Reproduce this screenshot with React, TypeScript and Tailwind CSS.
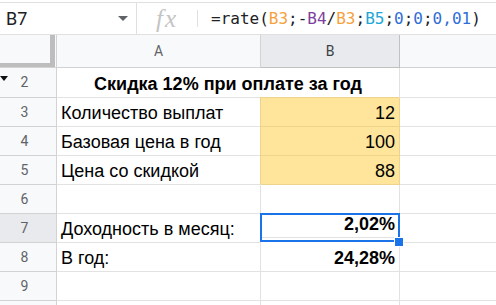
import React from "react";

const cellFont = { fontFamily: '"Liberation Sans", Arial, sans-serif' };

function RowHead({
  n,
  active,
  hidden,
}: {
  n?: number;
  active?: boolean;
  hidden?: boolean;
}) {
  return (
    <div
      className={`relative flex w-[57px] shrink-0 items-center justify-center border-r border-b border-[#d3d3d3] pr-[7px] font-['Roboto'] text-[14px] text-[#5f6368] ${
        active ? "bg-[#e8eaed] text-[#3c4043]" : "bg-[#f8f9fa]"
      }`}
    >
      {hidden && (
        <svg
          className="absolute left-0 top-[8px]"
          width="8"
          height="5"
          viewBox="0 0 8 5"
        >
          <path d="M0 0h8L4 5z" fill="#111" />
        </svg>
      )}
      {n}
    </div>
  );
}

function Row({
  n,
  h = "h-[29px]",
  active,
  hidden,
  children,
}: {
  n?: number;
  h?: string;
  active?: boolean;
  hidden?: boolean;
  children?: React.ReactNode;
}) {
  return (
    <div className={`flex ${h}`}>
      <RowHead n={n} active={active} hidden={hidden} />
      {children ?? (
        <>
          <Cell />
          <Cell b />
          <Tail />
        </>
      )}
    </div>
  );
}

function Cell({
  b,
  right,
  bold,
  yellow,
  children,
}: {
  b?: boolean;
  right?: boolean;
  bold?: boolean;
  yellow?: boolean;
  children?: React.ReactNode;
}) {
  return (
    <div
      style={cellFont}
      className={`flex shrink-0 items-end overflow-hidden whitespace-nowrap border-r border-b pb-[3px] text-[18px] leading-[20px] text-black ${
        b ? "w-[139px] pr-[4px]" : "w-[204px] pl-[4px]"
      } ${right ? "justify-end" : ""} ${bold ? "font-bold" : ""} ${
        yellow
          ? "border-[#ecd48c] bg-[#fee59b] shadow-[-1px_-1px_0_#ecd48c]"
          : "border-[#e2e2e2]"
      }`}
    >
      {children}
    </div>
  );
}

function Tail() {
  return <div className="flex-1 border-b border-[#e2e2e2]" />;
}

const ref = (c: string, t: string) => <span className={c}>{t}</span>;

export default function App() {
  return (
    <div className="h-[305px] w-[496px] overflow-hidden bg-white">
      {/* formula bar */}
      <div className="mt-[2px] flex h-[33px] border-t border-b border-[#e0e0e0]">
        <div className="flex w-[137px] shrink-0 items-center border-r border-[#e0e0e0] pl-[6px] pr-[8px]">
          <span className="flex-1 font-['Roboto'] text-[18px] text-[#202124]">
            B7
          </span>
          <svg width="10" height="5" viewBox="0 0 10 5">
            <path d="M0 0h10L5 5z" fill="#5f6368" />
          </svg>
        </div>
        <div className="flex w-[60px] shrink-0 items-center justify-center">
          <span className="font-['Liberation_Serif'] text-[25px] italic leading-none tracking-[2px] text-[#c4c4c4]">
            fx
          </span>
        </div>
        <div className="my-[7px] w-px bg-[#e0e0e0]" />
        <div className="flex items-center whitespace-pre pl-[13px] font-['DejaVu_Sans_Mono'] text-[16px] text-[#202124]">
          =rate({ref("text-[#f6a23e]", "B3")};-{ref("text-[#7e3f9c]", "B4")}/
          {ref("text-[#f6a23e]", "B3")};{ref("text-[#20a7d6]", "B5")};
          {ref("text-[#2f6ed6]", "0")};{ref("text-[#2f6ed6]", "0")};
          {ref("text-[#2f6ed6]", "0,01")})
        </div>
      </div>

      {/* column headers */}
      <div className="flex h-[33px] font-['Roboto'] text-[14px] text-[#5f6368]">
        <div className="flex w-[57px] shrink-0 flex-col border-r border-b border-[#d3d3d3] bg-[#f8f9fa]">
          <div className="flex flex-1">
            <div className="flex-1" />
            <div className="w-[5px] bg-[#bdbdbd]" />
            <div className="w-px" />
          </div>
          <div className="mr-px h-[4px] bg-[#bdbdbd]" />
        </div>
        <div className="flex w-[204px] shrink-0 items-center justify-center border-r border-b border-[#d3d3d3] bg-[#f8f9fa]">
          A
        </div>
        <div className="flex w-[139px] shrink-0 items-center justify-center border-r border-b border-[#c0c0c0] bg-[#e8eaed] text-[#3c4043]">
          B
        </div>
        <div className="flex-1 border-b border-[#d3d3d3] bg-[#f8f9fa]" />
      </div>

      <Row n={2} h="h-[30px]" hidden>
        <div
          style={cellFont}
          className="flex w-[343px] shrink-0 items-end justify-center border-r border-b border-[#e2e2e2] pb-[3px] text-[18px] font-bold leading-[20px] text-black"
        >
          Скидка 12% при оплате за год
        </div>
        <Tail />
      </Row>
      <Row n={3}>
        <Cell>Количество выплат</Cell>
        <Cell b right yellow>
          12
        </Cell>
        <Tail />
      </Row>
      <Row n={4}>
        <Cell>Базовая цена в год</Cell>
        <Cell b right yellow>
          100
        </Cell>
        <Tail />
      </Row>
      <Row n={5}>
        <Cell>Цена со скидкой</Cell>
        <Cell b right yellow>
          88
        </Cell>
        <Tail />
      </Row>
      <Row n={6} />
      <Row n={7} active>
        <Cell>Доходность в месяц:</Cell>
        <div className="relative w-[139px] shrink-0">
          <Cell b right bold>
            2,02%
          </Cell>
          <div className="pointer-events-none absolute -left-px -top-px h-[29px] w-[140px] border-2 border-[#1a73e8]" />
          <div className="absolute left-[133px] top-[23px] h-[10px] w-[10px] border border-white bg-[#1a73e8]" />
        </div>
        <Tail />
      </Row>
      <Row n={8}>
        <Cell>В год:</Cell>
        <Cell b right bold>
          24,28%
        </Cell>
        <Tail />
      </Row>
      <Row n={9} />
      <Row />
    </div>
  );
}
